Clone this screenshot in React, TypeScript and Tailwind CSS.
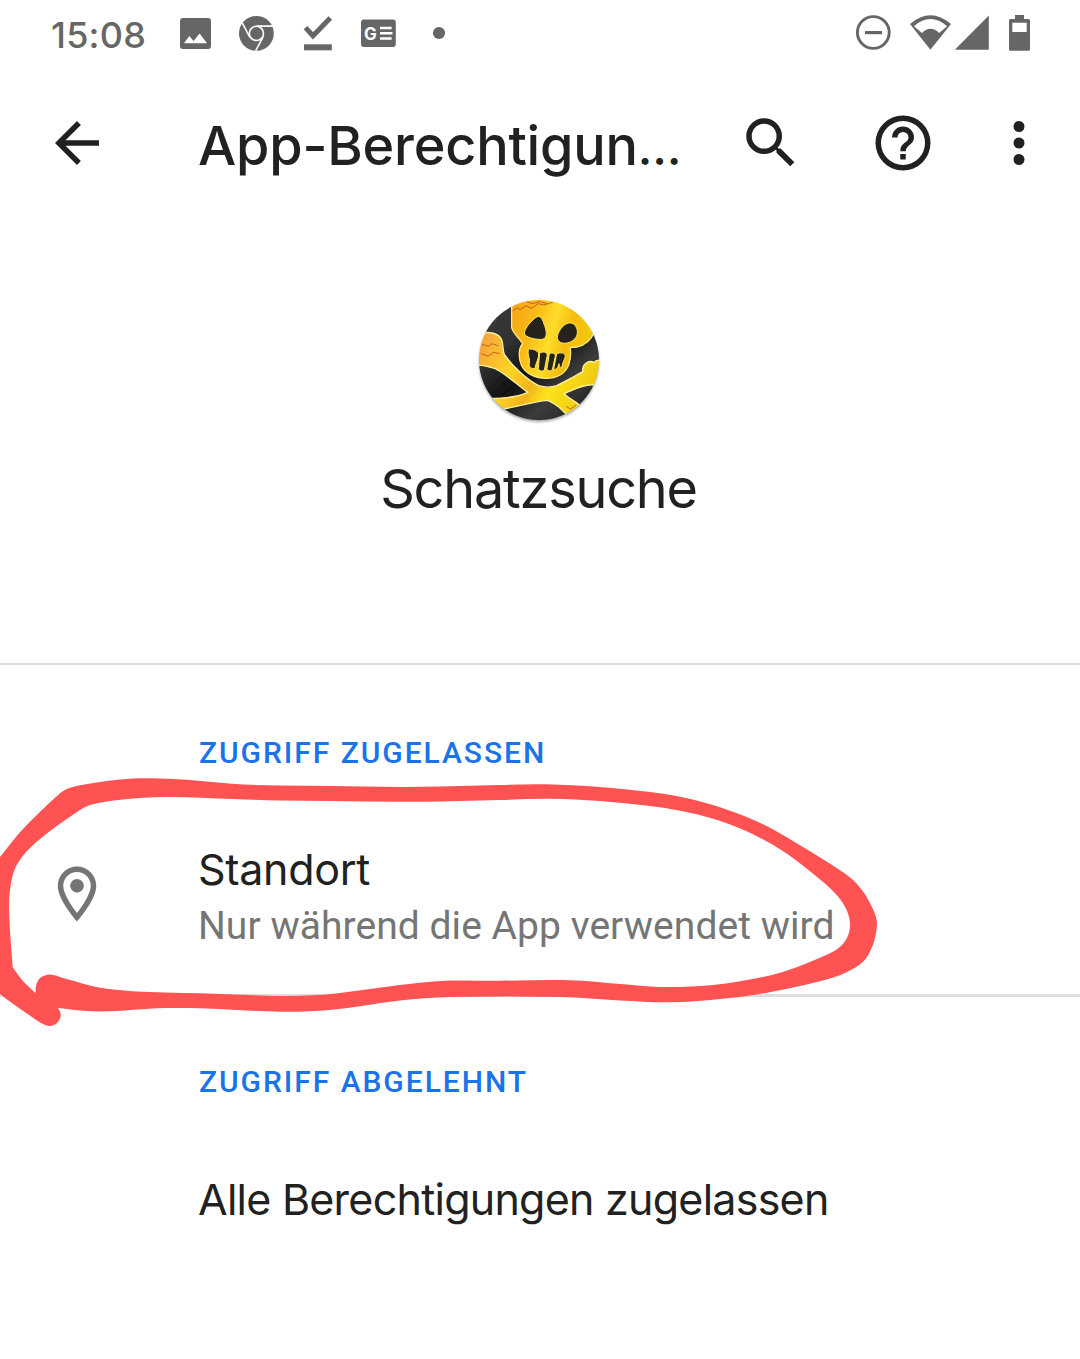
import type { ReactNode } from "react";

type Point = [number, number];

function Icon({ path, className = "" }: { path: string; className?: string }) {
  return (
    <svg viewBox="0 0 24 24" className={`size-[66px] shrink-0 ${className}`} fill="currentColor">
      <path d={path} />
    </svg>
  );
}

function StatusBar() {
  return (
    <header className="flex h-[66px] w-full items-start pl-[51px] text-[#666666]">
      <span className="mt-[14px] w-[124px] text-[36px] leading-[42px] font-medium tracking-[0.2px]">15:08</span>
      <svg viewBox="175 0 290 66" className="h-[66px] w-[290px] shrink-0" fill="currentColor">
        <rect x="180" y="18" width="31" height="31" rx="3" />
        <path d="M184 43.3 189.3 36l4.3 5 6-7.6 7.4 9.9z" fill="#fff" />
        <circle cx="256.4" cy="33.4" r="17.4" />
        <circle cx="256.4" cy="33.4" r="7.1" stroke="#fff" strokeWidth="1.6" />
        <path d="M256.4 26.1h16.6M249.8 37.2l-7.6-14.4M263 37.2l-7.4 13.6" stroke="#fff" strokeWidth="1.6" />
        <path d="m305.5 27.600 7.500 8.200 17.300-17.700" fill="none" stroke="currentColor" strokeWidth="5" />
        <path d="M304 44.3h27.800v6H304z" />
        <rect x="361" y="19.5" width="34.8" height="27.6" rx="3" />
        <text x="364" y="39.5" fill="#fff" fontSize="17" fontWeight="700">G</text>
        <path d="M380 26.700h11.600v2.600H380zm0 5.200h12.500v2.600H380zm0 5.300h11.600v2.600H380z" fill="#fff" />
        <circle cx="439" cy="33" r="6.1" />
      </svg>
      <svg viewBox="850 0 190 66" className="mr-[40px] ml-auto h-[66px] w-[190px] shrink-0" fill="currentColor">
        <circle cx="873.3" cy="32.5" r="15.9" fill="none" stroke="currentColor" strokeWidth="2.9" />
        <path d="M865 31h17v3.200h-17z" />
        <path
          fillRule="evenodd"
          d="M910 24Q930.400 6.500 951 24L930.400 49.700zM913.900 26.200 922 33Q930.400 24.700 939.200 33L947.100 26.200Q930.400 12 913.900 26.200z"
        />
        <path d="M988.800 15.500v34.200h-34z" />
        <path
          fillRule="evenodd"
          d="M1015 15h9v4h4.500a1.500 1.500 0 0 1 1.500 1.500v28.700a1.500 1.500 0 0 1-1.500 1.500h-18a1.500 1.500 0 0 1-1.500-1.500V20.500a1.500 1.500 0 0 1 1.500-1.500h4.500zM1012.300 22.800v9.300h14.400v-9.300z"
        />
      </svg>
    </header>
  );
}

function AppBar() {
  return (
    <nav className="flex h-[154px] items-center pl-[44px]">
      <Icon path="M20 11H7.830l5.590-5.590L12 4l-8 8 8 8 1.410-1.410L7.830 13H20z" />
      <h1 className="mt-[8px] ml-[88px] w-[540px] text-[54px] leading-[64px] font-medium tracking-[-0.200px] whitespace-nowrap">
        App-Berechtigun<span className="text-[48px] tracking-normal">…</span>
      </h1>
      <Icon path="M15.500 14h-.790l-.280-.270A6.471 6.471 0 0 0 16 9.500 6.500 6.500 0 1 0 9.500 16c1.610 0 3.090-.590 4.230-1.570l.270.280v.790l5 4.990L20.490 19zm-6 0a4.500 4.500 0 1 1 0-9 4.500 4.500 0 0 1 0 9z" />
      <Icon
        className="ml-[66px]"
        path="M11 18h2v-2h-2zm1-16a10 10 0 1 0 0 20 10 10 0 0 0 0-20zm0 18a8 8 0 1 1 0-16 8 8 0 0 1 0 16zm0-14a4 4 0 0 0-4 4h2a2 2 0 1 1 4 0c0 2-3 1.750-3 5h2c0-2.250 3-2.500 3-5a4 4 0 0 0-4-4z"
      />
      <Icon
        className="ml-[50px]"
        path="M12 8a2 2 0 1 0 0-4 2 2 0 0 0 0 4zm0 2a2 2 0 1 0 0 4 2 2 0 0 0 0-4zm0 6a2 2 0 1 0 0 4 2 2 0 0 0 0-4z"
      />
    </nav>
  );
}

function PirateLogo() {
  return (
    <svg viewBox="0 0 480 450" className="h-[150px] w-[160px]">
      <defs>
        <clipPath id="disc">
          <circle cx="237" cy="225" r="180" />
        </clipPath>
        <linearGradient id="gold" x1="0" y1="0" x2="1" y2="0.3">
          <stop offset="0" stopColor="#f3a21c" />
          <stop offset="0.3" stopColor="#fbb814" />
          <stop offset="0.55" stopColor="#ffdc2c" />
          <stop offset="0.75" stopColor="#f6bd10" />
          <stop offset="1" stopColor="#f2c80c" />
        </linearGradient>
        <linearGradient id="bones" gradientUnits="userSpaceOnUse" x1="60" y1="180" x2="400" y2="340">
          <stop offset="0" stopColor="#f5a53a" />
          <stop offset="0.3" stopColor="#ffd426" />
          <stop offset="0.5" stopColor="#f4b41c" />
          <stop offset="0.65" stopColor="#fbe31c" />
          <stop offset="1" stopColor="#efc80e" />
        </linearGradient>
        <linearGradient id="night" x1="0" y1="0" x2="1" y2="1">
          <stop offset="0" stopColor="#444" />
          <stop offset="0.35" stopColor="#303030" />
          <stop offset="0.5" stopColor="#111" />
          <stop offset="0.66" stopColor="#3c3c3c" />
          <stop offset="0.85" stopColor="#1c1c1c" />
          <stop offset="1" stopColor="#333" />
        </linearGradient>
        <filter id="drop" x="-20%" y="-20%" width="140%" height="140%">
          <feGaussianBlur stdDeviation="4" />
        </filter>
        <filter id="soft">
          <feGaussianBlur stdDeviation="1.5" />
        </filter>
      </defs>
      <circle cx="237" cy="231" r="179" fill="#000" opacity="0.4" filter="url(#drop)" />
      <g clipPath="url(#disc)">
        <g filter="url(#soft)">
          <path d="M0 0h480v450H0z" fill="url(#night)" />
          <g fill="url(#bones)" stroke="#fff2a0" strokeWidth="4">
            <path d="M50 150C75 138 112 140 124 162C132 178 126 196 134 210C160 246 200 284 236 302C255 308 272 308 290 302C322 286 350 272 368 260C366 238 384 224 402 232C410 222 430 222 440 240V300H398C372 298 345 312 312 326C330 342 350 352 366 366L336 410C315 378 285 354 262 346C220 350 170 366 130 372L84 370V340C120 340 172 338 203 322C160 290 120 252 96 248C78 244 66 238 50 242z" />
          </g>
          <path
            d="M155 30V128C160 148 180 160 188 176C174 190 176 222 184 240C196 268 230 280 258 280C290 280 316 266 326 240C332 220 334 202 330 188C360 188 380 178 394 158L410 130V30z"
            fill="url(#gold)"
            stroke="#ffeb82"
            strokeWidth="4"
          />
          <g fill="#26241f" stroke="#ffe95c" strokeWidth="3">
            <path d="M232 95C216 102 193 132 193 144C194 158 230 165 248 163C264 158 260 136 251 114C247 100 240 92 232 95z" />
            <path d="M326 114C308 118 292 142 292 158C294 178 320 178 335 169C350 161 356 144 350 130C346 117 336 113 326 114z" />
            <path d="M205 193C214 190 231 194 236 206C237 220 228 232 225 250C214 252 206 248 208 234C211 220 201 210 205 193z" />
            <path d="M239 204C248 199 260 200 262 210L253 255C246 261 236 258 235 250z" />
            <path d="M268 206C276 202 286 204 286 214L277 254C270 260 261 258 261 250z" />
            <path d="M290 206C300 202 316 202 316 214C314 222 308 232 305 248C300 248 297 242 297 236C294 248 288 256 281 252z" />
          </g>
          <path
            d="m158 78 14-10 8 6 18-12 16 8 20-14 18 4 26-8M196 48l20 8 22-6 24 6M66 178l20 6 10-8 18 6M64 206l20 8 16-12 20 4M318 364l14 8 16-12"
            fill="none"
            stroke="#b84d12"
            strokeWidth="3"
            opacity="0.8"
          />
        </g>
      </g>
    </svg>
  );
}

function SectionTitle({ children }: { children: ReactNode }) {
  return (
    <h3 className="pl-[199px] font-[Roboto] text-[30px] leading-[40px] font-medium tracking-[1.950px] whitespace-nowrap text-[#1a73e8]">
      {children}
    </h3>
  );
}

// The brush line is stored as runs of edge points; runs meet in sharp corners.
const brushRuns: Point[][] = [
  [[-6, 865], [0, 857], [23, 829], [58, 795], [68, 788.5], [83, 784.8], [107, 781], [133, 778.5], [160, 778.5], [187, 779.8], [243, 784.5], [280, 785.5], [330, 786], [400, 787], [440, 786.5], [500, 785], [545, 784.3], [600, 787], [650, 792], [680, 796.7], [713, 805], [746.7, 817], [770, 827.7], [800, 845.3], [840, 870.3], [857, 884], [870, 903], [877, 925], [867, 957], [847, 972], [817, 982], [760, 994], [720, 999], [670, 1002.3], [620, 1000.5], [560, 997], [450, 997], [400, 1000.5], [330, 1010], [280, 1011.7], [200, 1008.3], [157, 1008.3], [110, 1011.3], [80, 1010.5], [58, 1007.7]],
  [[58, 1007.7], [60.8, 1015], [57, 1023], [50, 1026], [43, 1024], [33, 1017.7], [5, 998], [-6, 989]],
];

const holeRuns: Point[][] = [
  [[35.7, 993.3], [23, 981], [12.7, 967.3]],
  [[12.7, 967.3], [9.3, 917], [10, 890], [16.7, 865], [36.7, 841.7], [80, 810], [92, 804.5], [110, 800.9], [140, 798], [170, 797], [233, 799], [280, 800.5], [330, 801], [400, 801.7], [440, 801.5], [500, 800], [550, 798.7], [600, 801], [650, 806], [680, 810.7], [713.3, 818.7], [746.7, 831.3], [780, 849.3], [810, 871.3], [840, 899], [850, 923], [843, 944], [817, 959], [773, 974.7], [713, 985], [660, 987], [620, 984], [570, 980.2], [500, 980.7], [445, 980.8], [400, 985], [340, 993], [313, 995.3], [280, 996], [200, 993.3], [143, 991.7], [100, 987.7], [63, 978], [50, 974.5], [40, 978], [36, 986], [35.7, 993.3]],
];

function smoothRun(points: Point[]): string {
  let d = "";
  for (let i = 0; i < points.length - 1; i++) {
    const before = points[i - 1] ?? points[i];
    const from = points[i];
    const to = points[i + 1];
    const after = points[i + 2] ?? to;
    // Handle length follows the segment so that uneven spacing does not overshoot.
    const span = Math.hypot(to[0] - from[0], to[1] - from[1]) / 3;
    const inLength = Math.hypot(to[0] - before[0], to[1] - before[1]) || 1;
    const outLength = Math.hypot(after[0] - from[0], after[1] - from[1]) || 1;
    const c1x = from[0] + ((to[0] - before[0]) / inLength) * span;
    const c1y = from[1] + ((to[1] - before[1]) / inLength) * span;
    const c2x = to[0] - ((after[0] - from[0]) / outLength) * span;
    const c2y = to[1] - ((after[1] - from[1]) / outLength) * span;
    d += `C${c1x} ${c1y} ${c2x} ${c2y} ${to[0]} ${to[1]}`;
  }
  return d;
}

function contour(runs: Point[][]): string {
  return `M${runs[0][0].join(" ")}${runs.map(smoothRun).join("")}Z`;
}

function Marker() {
  return (
    <svg viewBox="0 0 1080 1359" className="pointer-events-none absolute inset-0 h-[1359px] w-[1080px]">
      <path fill="#ff5252" fillRule="evenodd" d={contour(brushRuns) + contour(holeRuns)} />
    </svg>
  );
}

export default function App() {
  return (
    <main className="relative h-[1359px] w-[1080px] overflow-hidden bg-white font-[Inter,sans-serif] text-[#212121]">
      <StatusBar />
      <AppBar />
      <section className="flex h-[445px] flex-col items-center border-b-2 border-[#dedede] pt-[65px]">
        <PirateLogo />
        <h2 className="mt-[22px] mr-[3px] text-[54px] leading-[64px] font-normal tracking-[-1.200px]">Schatzsuche</h2>
      </section>
      <section className="flex h-[332px] flex-col border-b-[3px] border-[#dedede] pt-[68px]">
        <SectionTitle>ZUGRIFF ZUGELASSEN</SectionTitle>
        <div className="mt-[68px] flex pl-[44px]">
          <Icon
            className="mt-[20px] text-[#757575]"
            path="M12 2a7 7 0 0 0-7 7c0 5.250 7 13 7 13s7-7.750 7-13a7 7 0 0 0-7-7zM7 9a5 5 0 0 1 10 0c0 2.880-2.880 7.190-5 9.880C9.920 16.210 7 11.850 7 9zm5-2.500a2.500 2.500 0 1 0 0 5 2.500 2.500 0 0 0 0-5z"
          />
          <div className="ml-[88px] whitespace-nowrap">
            <p className="text-[43px] leading-[56px] tracking-[-0.300px]">Standort</p>
            <p className="mt-px font-[Roboto] text-[39px] leading-[56px] tracking-[0.050px] text-[#757575]">
              Nur während die App verwendet wird
            </p>
          </div>
        </div>
      </section>
      <section className="pt-[65px]">
        <SectionTitle>ZUGRIFF ABGELEHNT</SectionTitle>
        <p className="mt-[69px] pl-[198px] text-[43px] leading-[56px] tracking-[-0.750px] whitespace-nowrap">
          Alle Berechtigungen zugelassen
        </p>
      </section>
      <Marker />
    </main>
  );
}
